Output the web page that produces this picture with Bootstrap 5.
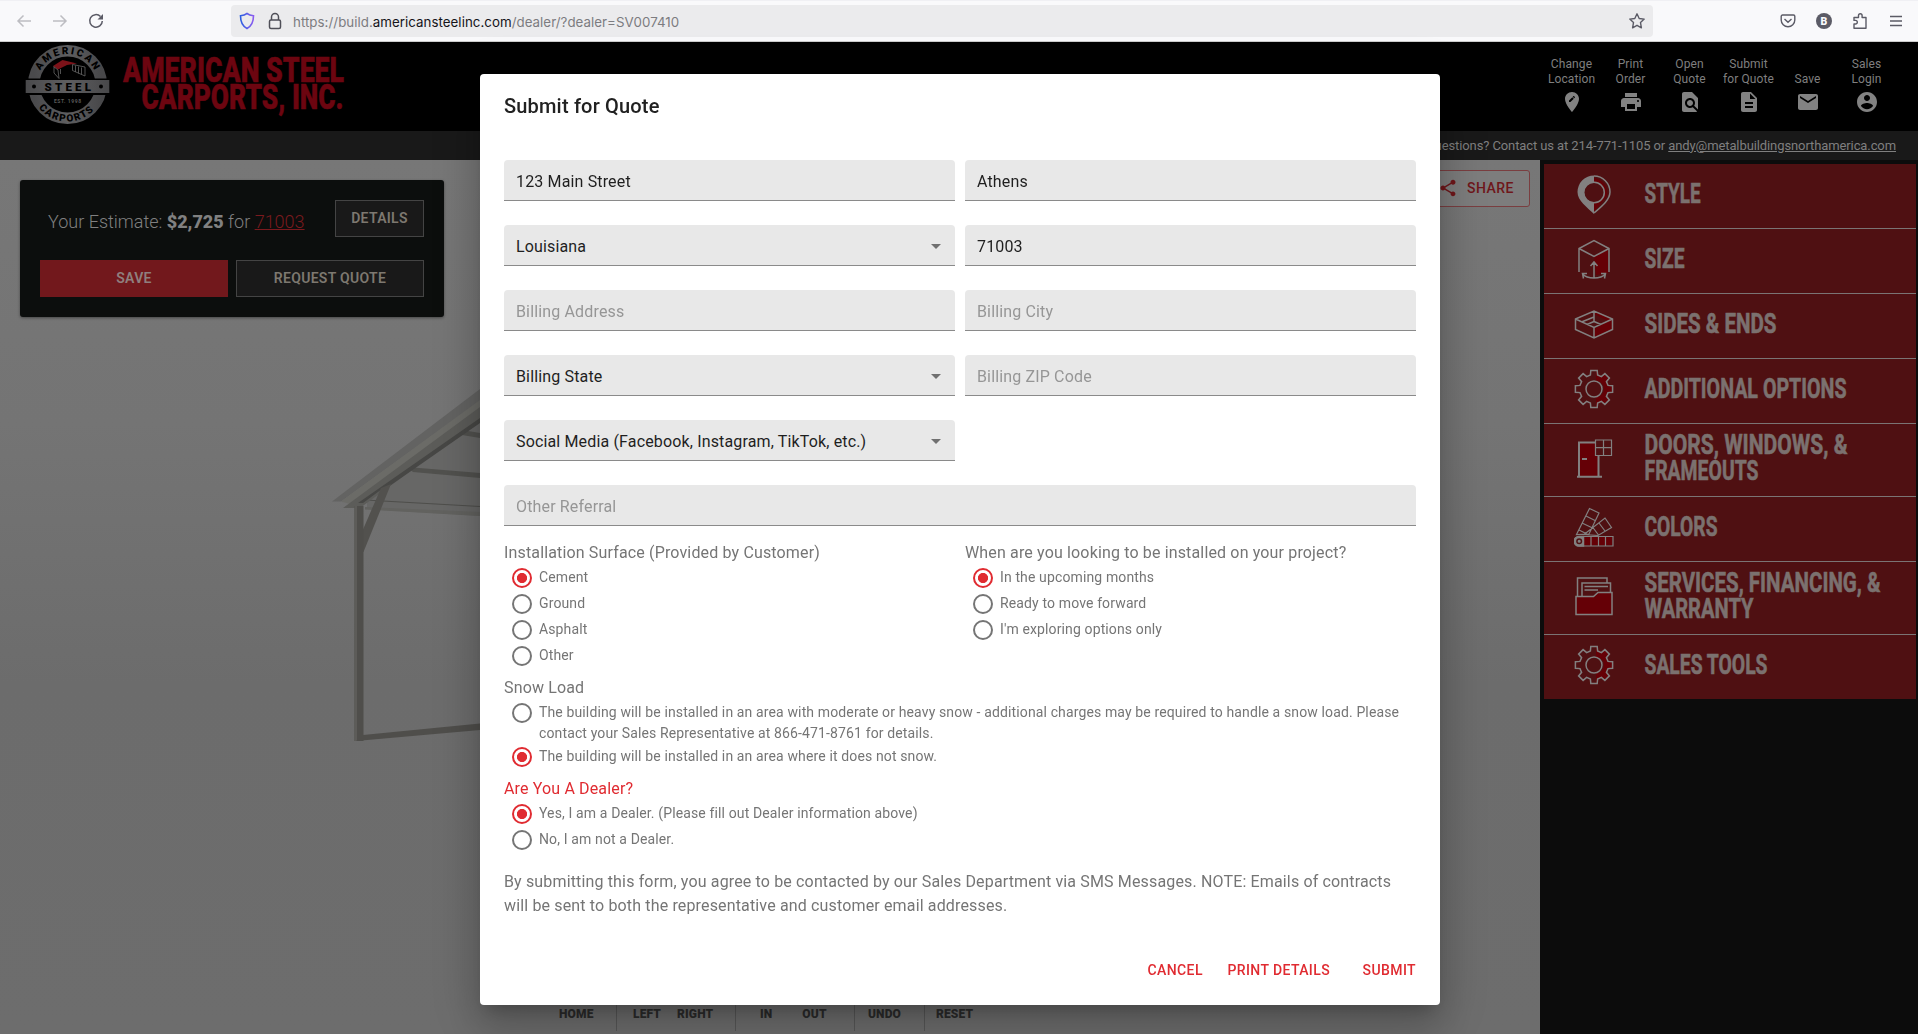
<!DOCTYPE html>
<html lang="en">
<head>
<meta charset="utf-8">
<title>American Steel Carports - Submit for Quote</title>
<link href="https://cdn.jsdelivr.net/npm/bootstrap@5.3.0/dist/css/bootstrap.min.css" rel="stylesheet">
<style>
  body { font-family: Roboto, sans-serif; height: 1034px; overflow: hidden; background: #0c0c0c; font-size: 16px; line-height: 24px; }
  svg { display: block; flex: none; }
  svg text { font-family: Roboto, sans-serif; }

  /* browser toolbar */
  .browser-bar { height: 42px; background: #f9f9fb; border-top: 1px solid #f0f0f4; border-bottom: 1px solid #ccc; padding: 0 12px 0 14px; color: #5b5b66; }
  .url-box { width: 1422px; height: 32px; margin-left: 125px; background: #ebebed; border-radius: 4px; padding: 0 8px 0 8px; }
  .url-text { font-family: Inter, sans-serif; font-size: 13.3px; color: #7c7c80; letter-spacing: .04px; margin-left: 11px; padding-top: 2px; }
  .url-text b { font-weight: 400; color: #15141a; }

  /* site header */
  .site-head { height: 89px; background: #000; padding-left: 25px; padding-right: 22px; }
  .site-head nav { padding-top: 13px; }
  .head-link { width: 59px; height: 59px; font-size: 12px; line-height: 15px; letter-spacing: .1px; color: #7f7f7f; }
  .head-link svg { fill: #828282; margin-top: 3px; }
  .contact-bar { height: 29px; background: #191919; color: #7f7f7f; font-size: 13px; padding-right: 22px; letter-spacing: -.1px; }
  .contact-bar a { color: #7f7f7f; }

  /* viewer */
  .viewer { width: 1540px; height: 874px; background: linear-gradient(#777 0%, #747474 30%, #6c6c6c 60%, #6d6d6d 100%); }
  .scene { left: 0; top: 0; }
  .estimate { width: 424px; height: 137px; margin: 20px; padding: 20px; background: #0c0e0d; border-radius: 3px; box-shadow: 0 1px 3px rgba(0,0,0,.4); }
  .est-text { font-weight: 300; font-size: 18px; color: #808080; padding: 10px 0 0 8px; }
  .est-text b { font-weight: 900; }
  .est-text a { color: #7b1a1e; }
  .box-btn { height: 37px; border: 1px solid #444; border-radius: 0; background: #191919; color: #7d7870; font-size: 14px; font-weight: 600; line-height: 20px; padding: 7px 0 0; text-align: center; letter-spacing: .3px; }
  .box-btn.red { background: #72181c; border-color: #72181c; color: #8f7f7e; }
  .details-btn { width: 89px; }
  .share-btn { width: 105px; height: 37px; margin: 10px 10px 0 0; border: 1px solid #7a3e40; border-radius: 3px; background: #7d7d7d; color: #6f161a; font-size: 14px; font-weight: 500; letter-spacing: .5px; padding: 0 15px 1px 0; gap: 9px; }
  .view-tools { height: 29px; margin-left: 537px; font-size: 12px; font-weight: 900; color: #2b2b2b; line-height: 19px; letter-spacing: .15px; }
  .view-tools > div { height: 26px; border-right: 1px solid #575757; }
  .view-tools > div:last-child { border: 0; }

  /* menu */
  .side-menu { width: 378px; background: #0c0c0c; padding: 4px 2px 0 4px; }
  .menu-item { background: #4f1012; border-bottom: 1px solid #7b7474; height: 65px; padding-left: 30px; gap: 30px; }
  .menu-item.tall { height: 73px; }
  .menu-item:last-child { border: 0; height: 64px; }
  .menu-item text { fill: #7b716f; font-size: 27.5px; font-weight: 700; stroke: #7b716f; stroke-width: .6; }
  .ico { fill: none; stroke: #828080; stroke-width: 1.5; margin-top: -4px; }
  .ico .tint { fill: #650006; stroke: none; }

  /* dialog */
  .quote-modal { padding-left: 2px; }
  .quote-modal .modal-dialog { max-width: 960px; margin: 74px auto 0; }
  .quote-modal .modal-content { height: 931px; border: 0; border-radius: 4px; padding: 0 24px; background: #fff;
    box-shadow: 0 11px 15px -7px rgba(0,0,0,.2), 0 24px 38px 3px rgba(0,0,0,.14), 0 9px 46px 8px rgba(0,0,0,.12); }
  .dlg-title { font-size: 20px; font-weight: 500; line-height: 32px; letter-spacing: .18px; color: #212121; padding-top: 16px; height: 86px; margin: 0; }
  .fields { --bs-gutter-x: 10px; --bs-gutter-y: 24px; margin-top: 0; }
  .fields .form-control { height: 41px; background: #e8e8e8; border: 0; border-bottom: 1px solid #8a8a8a; border-radius: 4px 4px 0 0; padding: 2px 12px 0; font-size: 16px; letter-spacing: .15px; color: #1f1f1f; line-height: 38px; }
  .fields .picker .form-control { padding-top: 3px; line-height: 37px; }
  .fields .form-control::placeholder { color: #969696; opacity: 1; }
  .picker { position: relative; }
  .picker::after { content: ""; position: absolute; right: 14px; top: 19px; border: 5px solid transparent; border-top-color: #707070; border-bottom: 0; }
  .fields-wrap { margin-top: -24px; }
  .legend-line { height: 24px; letter-spacing: .15px; color: #757575; }
  .legend-line.red { color: #e02b31; }
  .section-gap { margin-top: 7px; }
  .choices { --bs-gutter-x: 10px; padding-top: 15px; }
  .opt { padding: 0 0 0 8px; gap: 7px; color: #757575; min-height: 26px; font-size: 14px; line-height: 21px; letter-spacing: .13px; }
  .opt label { padding-top: 2px; }
  .opt input.form-check-input { width: 20px; height: 20px; margin: 3px 0 0 0; flex: none; border: 2px solid #757575; background: #fff; float: none; }
  .opt input.form-check-input:checked { border-color: #e02b31; background: radial-gradient(circle, #e02b31 4.7px, #fff 5.4px); }
  .dlg-note { letter-spacing: .15px; color: #757575; margin-top: 17px; }
  .dlg-actions { padding-top: 40px; gap: 24.5px; }
  .dlg-btn { color: #e02b31; font-size: 14px; font-weight: 500; letter-spacing: .4px; }
  .dlg-btn:last-child { margin-left: 8px; }
</style>
</head>
<body>
<svg width="0" height="0" class="position-absolute">
  <symbol id="gear" viewBox="-20 -20 40 40">
    <path fill="#650006" stroke="none" d="M2-18H3L4-13.5 7.5-12 11-15 15-11 12-7 14-3.500 18-3V3L14 3.500 12 7 15 11 11 15 7.500 12 4 14 3 18H2V8A8 8 0 0 0 2-8Z"/>
    <path d="M-3.600-14-3.200-18.600H3.200L3.600-14 7.350-12.400 10.900-15.400 15.400-10.900 12.400-7.350 14-3.600 18.600-3.200V3.200L14 3.600 12.400 7.350 15.400 10.900 10.900 15.400 7.350 12.400 3.600 14 3.200 18.600H-3.200L-3.600 14-7.350 12.400-10.900 15.400-15.400 10.900-12.400 7.350-14 3.600-18.600 3.200V-3.200L-14-3.600-12.400-7.350-15.400-10.900-10.900-15.400-7.350-12.400Z"/>
    <circle r="8"/>
  </symbol>
</svg>

<div class="browser-bar d-flex align-items-center">
  <div class="d-flex gap-3">
    <svg width="20" height="20" fill="none" stroke="#bdbdc2" stroke-width="1.5"><path d="M17 10H4M9.500 4.500 4 10l5.500 5.500"/></svg>
    <svg width="20" height="20" fill="none" stroke="#bdbdc2" stroke-width="1.5"><path d="M3 10h13M10.500 4.500 16 10l-5.500 5.500"/></svg>
    <svg width="20" height="20" fill="none" stroke="#5b5b66" stroke-width="1.500"><path d="M14.500 5.500A6.300 6.300 0 1 0 16.300 10"/><path d="M17 3v5.500h-5.500Z" fill="#5b5b66" stroke="none"/></svg>
  </div>
  <div class="url-box d-flex align-items-center">
    <svg width="16" height="18" fill="none" stroke-width="1.600"><defs><linearGradient id="sh"><stop stop-color="#2b5fe0"/><stop offset="1" stop-color="#8b5cf0"/></linearGradient></defs><path stroke="url(#sh)" d="M8 1.500C6 3 4 3.500 1.500 3.800c0 6 1.500 10.200 6.500 12.700 5-2.500 6.500-6.700 6.500-12.700C12 3.500 10 3 8 1.500Z"/></svg>
    <svg width="14" height="18" style="margin-left:13px" fill="none" stroke="#4f4f58" stroke-width="1.500"><rect x="1.500" y="8" width="11" height="8.500" rx="1.500"/><path d="M3.500 8V5a3.500 3.500 0 0 1 7 0v3"/></svg>
    <span class="url-text">https://build.<b>americansteelinc.com</b>/dealer/?dealer=SV007410</span>
    <svg class="ms-auto" width="16" height="16" viewBox="0 0 16 16" fill="none" stroke="#5b5b66" stroke-width="1.400" stroke-linejoin="round"><path d="M8 .8l2.200 4.700 5 .6-3.700 3.500.9 5.200L8 12.300l-4.400 2.500.9-5.200L.8 6.100l5-.6Z"/></svg>
  </div>
  <div class="d-flex gap-3 ms-auto">
    <svg width="20" height="20" fill="none" stroke="#5b5b66" stroke-width="1.400"><path d="M4.500 4h11a1.300 1.300 0 0 1 1.300 1.300V9a6.800 6.800 0 0 1-13.600 0V5.300A1.300 1.300 0 0 1 4.500 4ZM6.500 8l3.500 3.300L13.500 8"/></svg>
    <svg width="20" height="20"><circle cx="10" cy="10" r="8" fill="#5b5b66"/><text x="10" y="13.700" text-anchor="middle" font-size="10.500" font-weight="900" fill="#f9f9fb">B</text></svg>
    <svg width="20" height="20" fill="none" stroke="#5b5b66" stroke-width="1.400" stroke-linejoin="round"><path d="M4 17.300V13h1.500a1.800 1.800 0 0 0 0-3.600H4V6.500h4.500V4.500a1.800 1.800 0 0 1 3.600 0v2H16v10.800Z"/></svg>
    <svg width="20" height="20" stroke="#5b5b66" stroke-width="1.400"><path d="M4 5.500h12M4 10h12M4 14.500h12"/></svg>
  </div>
</div>

<header class="site-head d-flex justify-content-between">
  <svg width="330" height="89" viewBox="25 42 330 89">
    <defs>
      <linearGradient id="steel" x1="0" x2="1"><stop stop-color="#4a4a4c"/><stop offset=".5" stop-color="#5e5e60"/><stop offset="1" stop-color="#48484a"/></linearGradient>
      <path id="arcTop" d="M37 84.500a30.500 30.500 0 0 1 61 0"/>
      <path id="arcBot" d="M30.500 84.500a37 37 0 0 0 74 0"/>
    </defs>
    <circle cx="67.500" cy="84.500" r="33.700" fill="none" stroke="url(#steel)" stroke-width="11.500"/>
    <path d="M25 78.500h85V95H25Z" fill="#000"/>
    <path d="M25.700 80h83.600v13H25.700Z" fill="url(#steel)"/>
    <text font-size="10" font-weight="900" fill="#000" letter-spacing="2.200"><textPath href="#arcTop" startOffset="51%" text-anchor="middle">AMERICAN</textPath></text>
    <text font-size="10" font-weight="900" fill="#000" letter-spacing="1.400"><textPath href="#arcBot" startOffset="49%" text-anchor="middle">CARPORTS</textPath></text>
    <text x="44.500" y="90.700" font-size="11.500" font-weight="900" fill="#000" textLength="46.500" lengthAdjust="spacing">STEEL</text>
    <circle cx="34" cy="86.500" r="2"/><circle cx="101" cy="86.500" r="2"/>
    <text x="54" y="102.500" font-size="5" font-weight="700" fill="#5a5a5a" textLength="27">EST. 1998</text>
    <path d="M53 66 62.500 60 77 63.500 67 65 58 69.500Z" fill="#7c1219"/>
    <path d="M53.500 66.500 58 70l1 8.500M54 67v6l5 5.500M60.500 69v5M72.500 64.500v6l12.500 5.500V67Zm3 1v6.500m3-5.500v7m3-6v7" fill="none" stroke="#666" stroke-width=".8"/>
    <g fill="#6c0510" stroke="#6c0510" stroke-width=".5" font-size="35" font-weight="900">
      <text x="123" y="81.500" textLength="221" lengthAdjust="spacingAndGlyphs">AMERICAN STEEL</text>
      <text x="141.500" y="108.500" textLength="202" lengthAdjust="spacingAndGlyphs">CARPORTS, INC.</text>
    </g>
  </svg>
  <nav class="d-flex text-center">
    <a class="head-link d-flex flex-column align-items-center justify-content-end text-decoration-none">Change<br>Location<svg width="24" height="24"><path d="M12 2C8.140 2 5 5.140 5 9c0 5.250 7 13 7 13s7-7.750 7-13c0-3.860-3.140-7-7-7zm-1.560 10H9v-1.440l3.350-3.340 1.430 1.430L10.440 12zm4.450-4.450l-.7.7-1.440-1.440.7-.7c.15-.15.39-.15.54 0l.9.9c.15.15.15.39 0 .54z"/></svg></a>
    <a class="head-link d-flex flex-column align-items-center justify-content-end text-decoration-none">Print<br>Order<svg width="24" height="24"><path d="M19 8H5c-1.660 0-3 1.340-3 3v6h4v4h12v-4h4v-6c0-1.660-1.340-3-3-3zm-3 11H8v-5h8v5zm3-7c-.55 0-1-.45-1-1s.45-1 1-1 1 .45 1 1-.45 1-1 1zm-1-9H6v4h12V3z"/></svg></a>
    <a class="head-link d-flex flex-column align-items-center justify-content-end text-decoration-none">Open<br>Quote<svg width="24" height="24"><path d="M20 19.590V8l-6-6H6c-1.100 0-1.990.9-1.990 2L4 20c0 1.100.89 2 1.990 2H18c.45 0 .85-.15 1.190-.4l-4.430-4.430c-.8.52-1.740.83-2.760.83-2.760 0-5-2.240-5-5s2.240-5 5-5 5 2.240 5 5c0 1.020-.31 1.960-.83 2.750L20 19.590zM9 13c0 1.660 1.340 3 3 3s3-1.340 3-3-1.340-3-3-3-3 1.340-3 3z"/></svg></a>
    <a class="head-link d-flex flex-column align-items-center justify-content-end text-decoration-none text-nowrap">Submit<br>for Quote<svg width="24" height="24"><path d="M14 2H6c-1.100 0-1.990.9-1.990 2L4 20c0 1.100.89 2 1.990 2H18c1.100 0 2-.9 2-2V8l-6-6zm2 16H8v-2h8v2zm0-4H8v-2h8v2zm-3-5V3.500L18.500 9H13z"/></svg></a>
    <a class="head-link d-flex flex-column align-items-center justify-content-end text-decoration-none">Save<svg width="24" height="24"><path d="M20 4H4c-1.100 0-1.990.9-1.990 2L2 18c0 1.100.9 2 2 2h16c1.100 0 2-.9 2-2V6c0-1.100-.9-2-2-2zm0 4l-8 5-8-5V6l8 5 8-5v2z"/></svg></a>
    <a class="head-link d-flex flex-column align-items-center justify-content-end text-decoration-none">Sales<br>Login<svg width="24" height="24"><path d="M12 2C6.480 2 2 6.480 2 12s4.480 10 10 10 10-4.480 10-10S17.520 2 12 2zm0 3c1.660 0 3 1.340 3 3s-1.340 3-3 3-3-1.340-3-3 1.340-3 3-3zm0 14.200c-2.500 0-4.710-1.280-6-3.220.03-1.990 4-3.080 6-3.080 1.990 0 5.970 1.090 6 3.080-1.290 1.940-3.500 3.220-6 3.220z"/></svg></a>
  </nav>
</header>
<div class="contact-bar d-flex align-items-center justify-content-end"><span>Questions? Contact us at 214-771-1105 or <a href="#">andy@metalbuildingsnorthamerica.com</a></span></div>

<main class="d-flex">
  <section class="viewer position-relative d-flex flex-column justify-content-between">
    <svg class="scene position-absolute" width="500" height="874" viewBox="0 160 500 874">
      <path d="M367 501 480 420V516L367 509Z" fill="#676766"/>
      <path d="M365 509.500 480 516V512L365 507Z" fill="#62625f"/>
      <path d="M365 500 480 506.500" stroke="#4e4e4b" stroke-width="1.200"/>
      <path d="M407 467 480 473V478L413 472Z" fill="#51514e"/>
      <path d="M456 434 462 430 480 433V438Z" fill="#51514e"/>
      <path d="M332 501.500 480 389V401L341 501.500Z" fill="#636362"/>
      <path d="M341 501.500 480 400V409L350 504Z" fill="#6b6b67"/>
      <path d="M343 508 480 407V420L360 508Z" fill="#5c5c59"/>
      <path d="M358 503 480 418V423L391 485 382 489 363 503Z" fill="#474745"/>
      <path d="M381 488 391 484 363.500 552 357 552 358 541Z" fill="#52514e"/>
      <path d="M354.500 506H363.500V741H354.500Z" fill="#4f4e4b"/>
      <path d="M354.500 506H357V741H354.500Z" fill="#5d5c59"/>
      <path d="M356 741 480 730V723.500L363 735Z" fill="#4f4e4b"/>
    </svg>
    <div class="d-flex justify-content-between position-relative">
      <div class="estimate d-flex flex-column justify-content-between">
        <div class="d-flex justify-content-between">
          <div class="est-text">Your Estimate: <b>$2,725</b> for <a href="#">71003</a></div>
          <div class="btn box-btn details-btn">DETAILS</div>
        </div>
        <div class="d-flex gap-2"><div class="btn box-btn red flex-fill w-50">SAVE</div><div class="btn box-btn flex-fill w-50">REQUEST QUOTE</div></div>
      </div>
      <div class="share-btn d-flex align-items-center justify-content-end">
        <svg width="20" height="20" viewBox="0 0 24 24" fill="#6f161a"><path d="M18 16.080c-.76 0-1.440.3-1.960.77L8.910 12.700c.05-.23.09-.46.09-.7s-.04-.47-.09-.7l7.050-4.110c.54.5 1.250.81 2.040.81 1.660 0 3-1.340 3-3s-1.340-3-3-3-3 1.340-3 3c0 .24.040.47.090.7L8.040 9.810C7.500 9.310 6.790 9 6 9c-1.660 0-3 1.340-3 3s1.340 3 3 3c.79 0 1.500-.31 2.040-.81l7.120 4.160c-.05.21-.08.43-.08.65 0 1.610 1.310 2.920 2.920 2.920 1.610 0 2.920-1.310 2.920-2.920s-1.310-2.920-2.920-2.920z"/></svg>SHARE
      </div>
    </div>
    <div class="view-tools d-flex position-relative">
      <div style="width:80px;padding-left:22px">HOME</div>
      <div class="d-flex" style="width:119px;padding-left:16px;gap:16px"><span>LEFT</span><span>RIGHT</span></div>
      <div class="d-flex" style="width:119px;padding-left:24px;gap:30px"><span>IN</span><span>OUT</span></div>
      <div style="width:70px;padding-left:13px">UNDO</div>
      <div style="padding-left:11px">RESET</div>
    </div>
  </section>

  <aside class="side-menu d-flex flex-column">
    <div class="menu-item d-flex align-items-center">
      <svg class="ico" width="40" height="40"><path class="tint" d="M20 4a15 15 0 0 1 13 18l-13 16V28a10 10 0 0 0 0-18Z"/><circle cx="20" cy="18.500" r="10.500" fill="#4f1012" stroke="none"/><path d="M20 1.500A16.500 16.500 0 0 0 3.500 18C3.500 27 13 33 20 40V28.500a10 10 0 0 1 0-20Z" fill="#828080" stroke="none"/><path d="M20 2a16 16 0 0 1 16 16c0 8-9 15-16 21"/><circle cx="20" cy="18.500" r="10.300"/></svg>
      <svg width="240" height="64"><text x="0.500" y="38.800" textLength="56" lengthAdjust="spacingAndGlyphs">STYLE</text></svg></div>
    <div class="menu-item d-flex align-items-center">
      <svg class="ico" width="40" height="40"><path class="tint" d="M20 17 34 10V34L22 36Z"/><path d="M5 33V9.500L20 1.500 35 9.500V33M5 9.500 20 17.500 35 9.500M20 39V23M16.500 27 20 23l3.500 4M9 35.500C13 40 27 40 31 35.500M9.500 39.500 8.500 34.500 13 34.500M30.500 39.500 31.500 34.500 27 34.500"/></svg>
      <svg width="240" height="64"><text x="0.500" y="38.800" textLength="40" lengthAdjust="spacingAndGlyphs">SIZE</text></svg></div>
    <div class="menu-item d-flex align-items-center">
      <svg class="ico" width="40" height="40"><path class="tint" d="M20 7 38 15V26L20 34V25l14-8L20 10Z"/><path d="M1.500 15 20 7 38.500 15V25.500L20 34 1.500 25.500ZM1.500 15 20 23.500 38.500 15M20 23.500V34M20 7v10.500M7.500 18 20 13M20 17.500 13 20.500M20 17.500 27 20.500"/></svg>
      <svg width="240" height="64"><text x="0.500" y="38.800" textLength="132" lengthAdjust="spacingAndGlyphs">SIDES &amp; ENDS</text></svg></div>
    <div class="menu-item d-flex align-items-center">
      <svg class="ico" width="40" height="40"><use href="#gear"/></svg>
      <svg width="240" height="64"><text x="0.500" y="38.800" textLength="202" lengthAdjust="spacingAndGlyphs">ADDITIONAL OPTIONS</text></svg></div>
    <div class="menu-item tall d-flex align-items-center">
      <svg class="ico" width="40" height="40"><path class="tint" d="M5 5h19v33H5Z"/><path d="M5 38.500V4.500H21M24.500 17.500V38.500M3 38.700h25" stroke-width="2"/><path d="M21.500 2h16v15.500h-16ZM29.500 2v15.500M21.500 9.700h16" fill="#4f1012" stroke-width="1.200"/><path d="M8 21h5" stroke-width="2"/></svg>
      <svg width="245" height="72"><text x="0.500" y="30" textLength="203" lengthAdjust="spacingAndGlyphs">DOORS, WINDOWS, &amp;</text><text x="0.500" y="56" textLength="114" lengthAdjust="spacingAndGlyphs">FRAMEOUTS</text></svg></div>
    <div class="menu-item d-flex align-items-center">
      <svg class="ico" width="40" height="40"><path class="tint" d="M10 30h28v8H10Z"/><path d="M2.500 27.500 15.500 1.500 25 6 15 27ZM12 9l9 4.500M8 16l9.500 4.500M5 23l8 4M10 27.500 31 11l6.500 9.500L24 28.500ZM18.500 20l6 8M25 16l6 8" stroke-width="1.200"/><path d="M5 29.500H39V39H5a4.700 4.700 0 0 1 0-9.500ZM17 29.500V39M24.500 29.500V39M31.500 29.500V39" stroke-width="1.200"/><path d="M5 29.500H9.500V39H5a4.700 4.700 0 0 1 0-9.500Z" fill="#828080"/><circle cx="5.200" cy="34.300" r="2.300" fill="#828080" stroke="#4f1012"/></svg>
      <svg width="240" height="64"><text x="0.500" y="38.800" textLength="73" lengthAdjust="spacingAndGlyphs">COLORS</text></svg></div>
    <div class="menu-item tall d-flex align-items-center">
      <svg class="ico" width="40" height="40"><path class="tint" d="M2 21H20L24 17H38V38H2Z"/><path d="M2 38.500V20.500H19.500L24 16.500H38V38.500ZM3.500 20.500V2H33V6.500M8 20.500V7H36.500V16.500M10.500 10.500H34M10.500 14H24"/></svg>
      <svg width="245" height="72"><text x="0.500" y="30" textLength="236" lengthAdjust="spacingAndGlyphs">SERVICES, FINANCING, &amp;</text><text x="0.500" y="56" textLength="109" lengthAdjust="spacingAndGlyphs">WARRANTY</text></svg></div>
    <div class="menu-item d-flex align-items-center">
      <svg class="ico" width="40" height="40"><use href="#gear"/></svg>
      <svg width="240" height="64"><text x="0.500" y="38.800" textLength="123" lengthAdjust="spacingAndGlyphs">SALES TOOLS</text></svg></div>
  </aside>
</main>

<div class="modal d-block quote-modal overflow-hidden" tabindex="-1">
  <div class="modal-dialog">
    <form class="modal-content">
      <h2 class="dlg-title">Submit for Quote</h2>
      <div class="fields-wrap">
      <div class="row fields">
        <div class="col-6"><input class="form-control" value="123 Main Street"></div>
        <div class="col-6"><input class="form-control" value="Athens"></div>
        <div class="col-6"><div class="picker"><div class="form-control">Louisiana</div></div></div>
        <div class="col-6"><input class="form-control" value="71003"></div>
        <div class="col-6"><input class="form-control" placeholder="Billing Address"></div>
        <div class="col-6"><input class="form-control" placeholder="Billing City"></div>
        <div class="col-6"><div class="picker"><div class="form-control">Billing State</div></div></div>
        <div class="col-6"><input class="form-control" placeholder="Billing ZIP Code"></div>
        <div class="col-6"><div class="picker"><div class="form-control">Social Media (Facebook, Instagram, TikTok, etc.)</div></div></div>
        <div class="col-12"><input class="form-control" placeholder="Other Referral"></div>
      </div>
      </div>
      <div class="row choices">
        <div class="col-6">
          <div class="legend-line">Installation Surface (Provided by Customer)</div>
          <div class="opt d-flex"><input class="form-check-input" type="radio" name="surf" id="s1" checked><label for="s1">Cement</label></div>
          <div class="opt d-flex"><input class="form-check-input" type="radio" name="surf" id="s2"><label for="s2">Ground</label></div>
          <div class="opt d-flex"><input class="form-check-input" type="radio" name="surf" id="s3"><label for="s3">Asphalt</label></div>
          <div class="opt d-flex"><input class="form-check-input" type="radio" name="surf" id="s4"><label for="s4">Other</label></div>
        </div>
        <div class="col-6">
          <div class="legend-line">When are you looking to be installed on your project?</div>
          <div class="opt d-flex"><input class="form-check-input" type="radio" name="when" id="w1" checked><label for="w1">In the upcoming months</label></div>
          <div class="opt d-flex"><input class="form-check-input" type="radio" name="when" id="w2"><label for="w2">Ready to move forward</label></div>
          <div class="opt d-flex"><input class="form-check-input" type="radio" name="when" id="w3"><label for="w3">I'm exploring options only</label></div>
        </div>
      </div>
      <div class="legend-line section-gap">Snow Load</div>
      <div class="opt d-flex"><input class="form-check-input" type="radio" name="snow" id="n1"><label for="n1">The building will be installed in an area with moderate or heavy snow - additional charges may be required to handle a snow load. Please<br>contact your Sales Representative at 866-471-8761 for details.</label></div>
      <div class="opt d-flex"><input class="form-check-input" type="radio" name="snow" id="n2" checked><label for="n2">The building will be installed in an area where it does not snow.</label></div>
      <div class="legend-line red section-gap">Are You A Dealer?</div>
      <div class="opt d-flex"><input class="form-check-input" type="radio" name="deal" id="d1" checked><label for="d1">Yes, I am a Dealer. (Please fill out Dealer information above)</label></div>
      <div class="opt d-flex"><input class="form-check-input" type="radio" name="deal" id="d2"><label for="d2">No, I am not a Dealer.</label></div>
      <p class="dlg-note mb-0">By submitting this form, you agree to be contacted by our Sales Department via SMS Messages. NOTE: Emails of contracts<br>will be sent to both the representative and customer email addresses.</p>
      <div class="dlg-actions d-flex justify-content-end">
        <span class="dlg-btn">CANCEL</span><span class="dlg-btn">PRINT DETAILS</span><span class="dlg-btn">SUBMIT</span>
      </div>
    </form>
  </div>
</div>
<script src="https://cdn.jsdelivr.net/npm/bootstrap@5.3.0/dist/js/bootstrap.bundle.min.js"></script>
</body>
</html>
